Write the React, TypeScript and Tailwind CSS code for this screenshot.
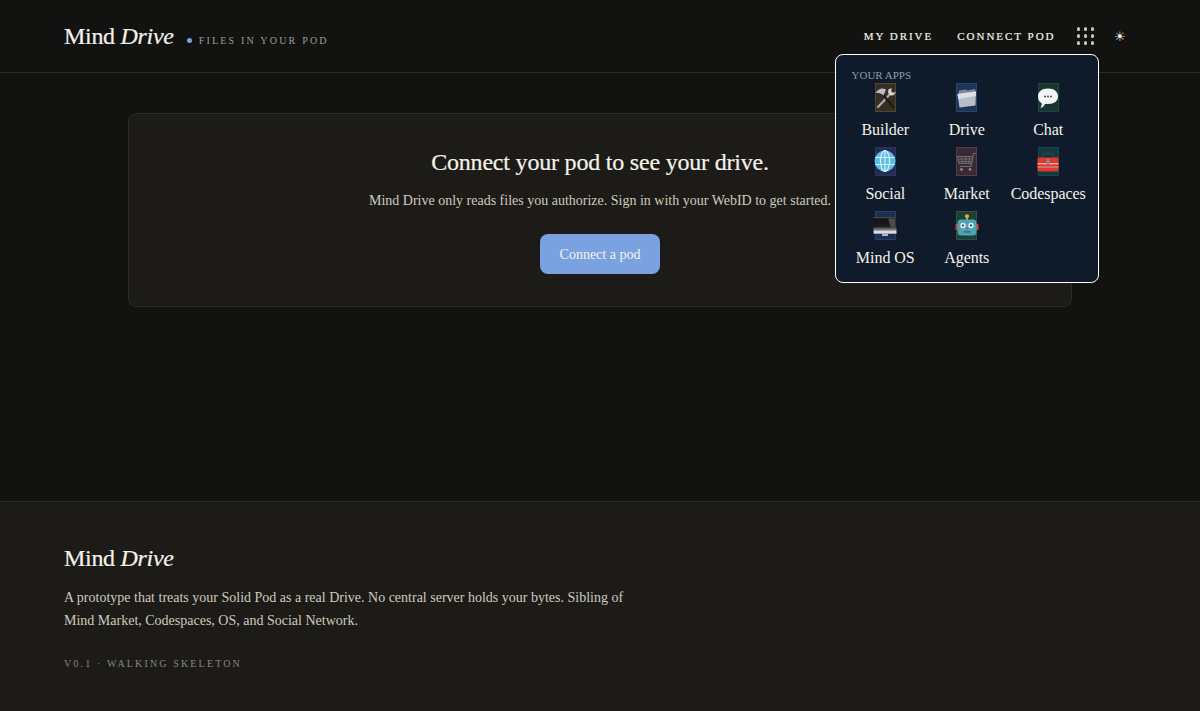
import React from 'react'

const serif = "font-['Liberation_Serif','Times_New_Roman',serif]"

const IconFrame = ({ border, bg, children }: { border: string; bg: string; children: React.ReactNode }) => (
  <div className={`relative h-[29px] w-[21px] border ${border} ${bg}`}>
    <svg viewBox="0 0 24 24" className="absolute left-1/2 top-1/2 h-[24px] w-[24px] -translate-x-1/2 -translate-y-1/2">
      {children}
    </svg>
  </div>
)

const apps = [
  {
    name: 'Builder',
    border: 'border-[#54452a]',
    bg: 'bg-[#332f24]',
    icon: (
      <>
        <path d="M5 21 L18.5 6.5" stroke="#a9a9ae" strokeWidth="2.2" strokeLinecap="round" />
        <path d="M20 21 L9.5 8" stroke="#1b1b1f" strokeWidth="2.4" strokeLinecap="round" />
        <path d="M2.5 7 C5 3 9 1.5 13 3.5 L10.5 9.5 C8 7.5 5.5 6.5 2.5 7Z" fill="#bcbcc1" />
        <path d="M15.5 3.5 C14.5 6 15.5 9 18 9.5 C20.5 9.8 22.5 8 22.5 5.5 L20 7 L18 5.5 L18.8 2.5 C17.5 2.3 16.2 2.6 15.5 3.5Z" fill="#d2d2d6" />
      </>
    ),
  },
  {
    name: 'Drive',
    border: 'border-[#24466e]',
    bg: 'bg-[#1b3657]',
    icon: (
      <>
        <path d="M3.5 8 L4 4.5 L11 3.5 L12 4.5 L20 3 L21 8Z" fill="#7f8994" />
        <path d="M2.5 8 L21 5.5 L20.5 19.5 L4.5 21.5Z" fill="#b6bec8" />
        <path d="M2.5 8 L21 5.5 L20.8 10 L3.2 13Z" fill="#dce0e5" />
      </>
    ),
  },
  {
    name: 'Chat',
    border: 'border-[#1c4742]',
    bg: 'bg-[#163630]',
    icon: (
      <>
        <path d="M12 2.5 C18.5 2.5 22 6 22 10.5 C22 15 18.5 18 12 18 L9 18 C8 20 6.5 21.5 4.5 22 C5.5 20 6 18.5 5.6 17 C3.2 15.8 2 13.5 2 10.5 C2 6 5.5 2.5 12 2.5Z" fill="#f7f7f7" />
        <circle cx="9" cy="10.5" r="0.9" fill="#333" />
        <circle cx="12" cy="10.5" r="0.9" fill="#333" />
        <circle cx="15" cy="10.5" r="0.9" fill="#333" />
      </>
    ),
  },
  {
    name: 'Social',
    border: 'border-[#2d3464]',
    bg: 'bg-[#252c52]',
    icon: (
      <>
        <circle cx="12" cy="11" r="10.5" fill="#5dbde6" />
        <g fill="none" stroke="#d8f1fa" strokeWidth="1.2">
          <ellipse cx="12" cy="11" rx="4.5" ry="10.5" />
          <path d="M12 0.5 V21.5 M2.5 7.5 H21.5 M2.5 14.5 H21.5" />
        </g>
      </>
    ),
  },
  {
    name: 'Market',
    border: 'border-[#5a3a48]',
    bg: 'bg-[#3a2a35]',
    icon: (
      <>
        <g fill="none" stroke="#6f6a70" strokeWidth="1.1">
          <path d="M21.5 3.5 H18.5 L16 16.5 H5" />
          <path d="M18 6.5 H2.5 L4 13.5 H16.6 M2.8 9 H17.5 M3.5 11.5 H17 M6.5 6.5 L7.5 13.5 M10.5 6.5 L10.8 13.5 M14.5 6.5 L14 13.5" />
        </g>
        <circle cx="6.5" cy="19.5" r="1.4" fill="#8c868c" />
        <circle cx="15" cy="19.5" r="1.4" fill="#8c868c" />
      </>
    ),
  },
  {
    name: 'Codespaces',
    border: 'border-[#11474e]',
    bg: 'bg-[#103a40]',
    icon: (
      <>
        <path d="M7 8 V5 C7 4 8 3.5 9 3.5 H15 C16 3.5 17 4 17 5 V8" fill="none" stroke="#39393c" strokeWidth="1.6" />
        <rect x="1.5" y="7.5" width="21" height="14" rx="1" fill="#e5352f" />
        <rect x="1.5" y="13" width="21" height="1.3" fill="#c9c4c4" />
        <rect x="1.5" y="16.5" width="21" height="1.1" fill="#c0a5a5" />
        <rect x="10.5" y="9" width="3" height="5" fill="#8d8d8d" />
      </>
    ),
  },
  {
    name: 'Mind OS',
    border: 'border-[#28406a]',
    bg: 'bg-[#1d2f50]',
    icon: (
      <>
        <defs>
          <linearGradient id="screen" x1="0" y1="0" x2="0" y2="1">
            <stop offset="0" stopColor="#5a5a5a" />
            <stop offset="0.12" stopColor="#141414" />
            <stop offset="0.7" stopColor="#1c1c1c" />
            <stop offset="1" stopColor="#9a9a9a" />
          </linearGradient>
        </defs>
        <rect x="0.5" y="3.2" width="23" height="13.3" fill="url(#screen)" />
        <path d="M15 4.5 H22.5 V14 H18Z" fill="#4a4a4a" />
        <rect x="0.5" y="16.5" width="23" height="3.2" fill="#dcdcdc" />
        <rect x="9" y="19.7" width="6" height="2.3" fill="#b5b5b5" />
      </>
    ),
  },
  {
    name: 'Agents',
    border: 'border-[#2c5345]',
    bg: 'bg-[#1c4035]',
    icon: (
      <>
        <rect x="11" y="3" width="2" height="4" fill="#9a9a9a" />
        <rect x="10" y="0.5" width="4" height="3.2" rx="1" fill="#f5a623" />
        <rect x="0.5" y="10" width="3" height="6" fill="#c8453c" />
        <rect x="20.5" y="10" width="3" height="6" fill="#c8453c" />
        <rect x="2.5" y="5.5" width="19" height="16" rx="3.5" fill="#4fa3b8" />
        <circle cx="8" cy="11.5" r="2.7" fill="#d7f4fa" />
        <circle cx="16" cy="11.5" r="2.7" fill="#d7f4fa" />
        <circle cx="8" cy="11.5" r="1.1" fill="#16414c" />
        <circle cx="16" cy="11.5" r="1.1" fill="#16414c" />
        <circle cx="12" cy="14.5" r="1" fill="#d9483f" />
        <rect x="8.5" y="17.2" width="7" height="1.4" fill="#2a6f80" />
      </>
    ),
  },
]

const Brand = () => (
  <span className="text-[24px] leading-[30px] tracking-[-0.3px] text-[#f5f2ea] [-webkit-text-stroke:0.2px_#f5f2ea]">
    Mind <em className="italic">Drive</em>
  </span>
)

const AppMenu = () => (
  <div className="absolute left-[834.5px] top-[54px] h-[229px] w-[264.5px] rounded-lg border border-white bg-[#0f1b2a] pl-[9px] pt-[13px]">
    <div className="pl-[7px] text-[11px] leading-[15px] text-[#8d9bad]">YOUR APPS</div>
    <div className="grid grid-cols-[repeat(3,81.5px)] auto-rows-[64px]">
      {apps.map((app) => (
        <div key={app.name} className="flex flex-col items-center">
          <IconFrame border={app.border} bg={app.bg}>
            {app.icon}
          </IconFrame>
          <div className="mt-[6px] whitespace-nowrap text-[16px] leading-[24px] tracking-[-0.05px] text-[#f5f2ea]">{app.name}</div>
        </div>
      ))}
    </div>
  </div>
)

export default function App() {
  return (
    <div className={`${serif} relative flex h-[711px] flex-col overflow-hidden bg-[#121211]`}>
      <header className="flex h-[73px] items-center justify-between border-b border-[#2b2a27] pl-[64px] pr-[74px]">
        <div className="flex items-baseline">
          <Brand />
          <span className="ml-[13px] mr-[7px] h-[5px] w-[5px] translate-y-[-1px] rounded-full bg-[#7aa2e0]" />
          <span className="text-[10px] tracking-[0.22em] text-[#a09c92]">FILES IN YOUR POD</span>
        </div>
        <nav className="flex items-center">
          <span className="text-[11px] tracking-[0.18em] text-[#f5f2ea] [-webkit-text-stroke:0.2px_#f5f2ea]">MY DRIVE</span>
          <span className="ml-[24px] text-[11px] tracking-[0.18em] text-[#f5f2ea] [-webkit-text-stroke:0.2px_#f5f2ea]">CONNECT POD</span>
          <div className="ml-[21px] grid grid-cols-3 gap-[3.5px]">
            {Array.from({ length: 9 }).map((_, i) => (
              <span key={i} className="h-[3.5px] w-[3.5px] rounded-full bg-[#c9c5ba]" />
            ))}
          </div>
          <span className="ml-[20px] text-[13px] leading-none text-[#f0ede4]">☀</span>
        </nav>
      </header>

      <main className="flex-1 px-[128px] pt-[40px]">
        <section className="flex h-[194px] flex-col items-center rounded-lg border border-[#2b2a27] bg-[#1c1b18] pt-[33px]">
          <h2 className="text-[24px] leading-[30px] tracking-[-0.2px] text-[#f5f2ea] [-webkit-text-stroke:0.2px_#f5f2ea]">Connect your pod to see your drive.</h2>
          <p className="mt-[13px] text-[14px] leading-[22px] text-[#cfcabd]">
            Mind Drive only reads files you authorize. Sign in with your WebID to get started.
          </p>
          <button className="mt-[22px] h-[40px] w-[120.5px] rounded-lg bg-[#7aa2e0] text-[14px] text-[#f5f2ea]">
            Connect a pod
          </button>
        </section>
      </main>

      <footer className="h-[210px] border-t border-[#2b2a27] bg-[#1c1b18] pl-[64px] pt-[41px]">
        <Brand />
        <p className="mt-[13px] w-[580px] text-[14px] leading-[23px] text-[#cfcabd]">
          A prototype that treats your Solid Pod as a real Drive. No central server holds your bytes. Sibling of Mind Market, Codespaces, OS, and Social Network.
        </p>
        <div className="mt-[25px] text-[10px] leading-[14px] tracking-[0.215em] text-[#8a867c]">V0.1 · WALKING SKELETON</div>
      </footer>

      <AppMenu />
    </div>
  )
}
